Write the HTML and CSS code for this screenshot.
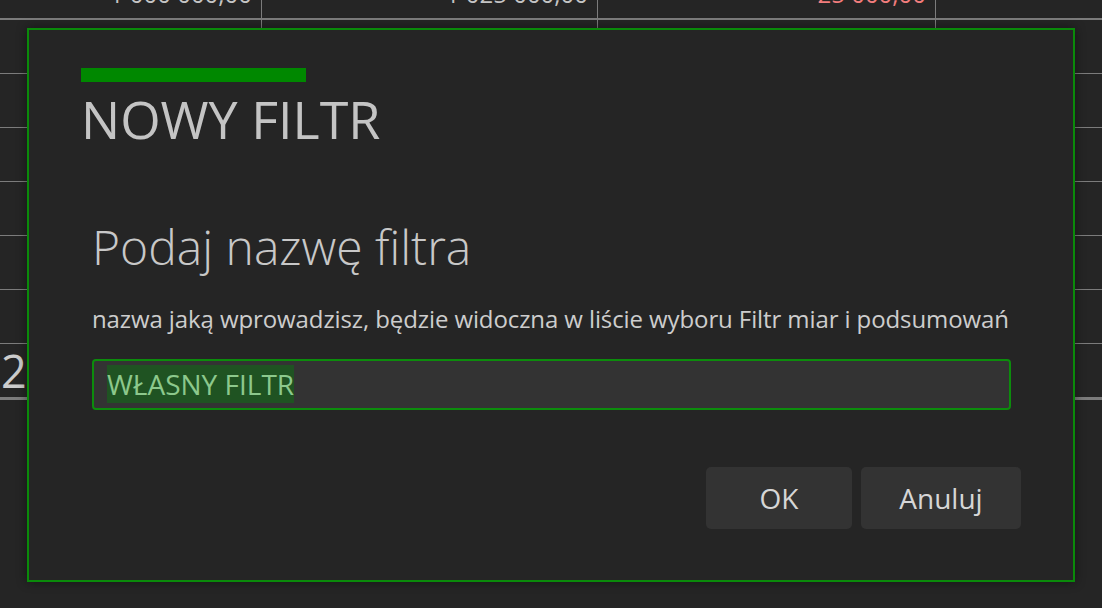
FILE: index.html
```html
<!DOCTYPE html>
<html lang="pl">
<head>
<meta charset="utf-8">
<title>Nowy filtr</title>
<link rel="stylesheet" href="styles.css">
</head>
<body>
<div class="sheet">
  <div class="row row-top">
    <div class="cell num">1 000 000,00</div>
    <div class="cell num">1 025 000,00</div>
    <div class="cell num neg">-25 000,00</div>
    <div class="cell last"></div>
  </div>
  <div class="row"><div class="cell"></div><div class="cell"></div><div class="cell"></div><div class="cell last"></div></div>
  <div class="row"><div class="cell"></div><div class="cell"></div><div class="cell"></div><div class="cell last"></div></div>
  <div class="row"><div class="cell"></div><div class="cell"></div><div class="cell"></div><div class="cell last"></div></div>
  <div class="row"><div class="cell"></div><div class="cell"></div><div class="cell"></div><div class="cell last"></div></div>
  <div class="row"><div class="cell"></div><div class="cell"></div><div class="cell"></div><div class="cell last"></div></div>
  <div class="row"><div class="cell"></div><div class="cell"></div><div class="cell"></div><div class="cell last"></div></div>
  <div class="row row-sum">
    <div class="cell big">2</div><div class="cell"></div><div class="cell"></div><div class="cell last"></div>
  </div>
</div>

<div class="dialog">
  <div class="accent"></div>
  <h1 class="title">NOWY FILTR</h1>
  <div class="content">
    <h2 class="prompt">Podaj nazwę filtra</h2>
    <p class="hint">nazwa jaką wprowadzisz, będzie widoczna w liście wyboru Filtr miar i podsumowań</p>
    <div class="field"><span class="sel">WŁASNY FILTR</span></div>
  </div>
  <div class="actions">
    <button class="btn btn-ok">OK</button>
    <button class="btn btn-cancel">Anuluj</button>
  </div>
</div>
</body>
</html>
```

FILE: styles.css
```css
* { box-sizing: border-box; }
html, body {
  margin: 0;
  padding: 0;
  width: 1102px;
  height: 608px;
  overflow: hidden;
  background: #252525;
  font-family: "Open Sans", "Noto Sans", sans-serif;
}

/* background spreadsheet */
.sheet {
  width: 1102px;
}
.row {
  display: grid;
  grid-template-columns: 262px 336px 338px 1fr;
  height: 54px;
  border-bottom: 1px solid #7c7c7c;
}
.row-top {
  height: 20px;
  border-bottom: 2px solid #7c7c7c;
}
.row-sum {
  height: 56px;
  border-bottom: 3px solid #7c7c7c;
}
.cell {
  border-right: 1px solid #7c7c7c;
  overflow: hidden;
}
.cell.last { border-right: none; }
.num {
  display: flex;
  justify-content: flex-end;
  align-items: flex-end;
  padding-right: 9px;
  padding-bottom: 12px;
  font-size: 24px;
  line-height: 24px;
  color: #c4c4c4;
  white-space: nowrap;
}
.num.neg { color: #f27d7d; }
.big {
  border-right: none;
  font-size: 45px;
  line-height: 53px;
  color: #cccccc;
  padding-left: 1px;
}

/* dialog */
.dialog {
  position: absolute;
  left: 27px;
  top: 28px;
  width: 1048px;
  height: 554px;
  border: 2px solid #0a8a0a;
  background: #252525;
  box-shadow: 0 0 10px rgba(0, 0, 0, 0.45);
  padding: 38px 52px 0 52px;
  display: flex;
  flex-direction: column;
}
.accent {
  width: 225px;
  height: 14px;
  background: #008800;
}
.title {
  margin: 11px 0 0 0;
  font-size: 52px;
  line-height: 52px;
  font-weight: 400;
  color: #c4c4c4;
}
.content {
  padding: 0 10px 0 11px;
}
.prompt {
  margin: 78px 0 0 0;
  font-size: 48px;
  line-height: 48px;
  font-weight: 300;
  color: #c8c8c8;
}
.hint {
  margin: 36px 0 0 0;
  font-size: 24px;
  line-height: 24px;
  letter-spacing: -0.1px;
  color: #cdcdcd;
  white-space: nowrap;
}
.field {
  margin-top: 28px;
  height: 51px;
  border: 2px solid #0c8c0c;
  border-radius: 4px;
  background: #333333;
  padding: 4px 13px 0 13px;
}
.sel {
  display: inline-block;
  height: 38px;
  line-height: 38px;
  font-size: 28px;
  color: #8cc88c;
  background: #1f5322;
  white-space: nowrap;
}
.actions {
  margin-top: 57px;
  display: flex;
  justify-content: flex-end;
  gap: 9px;
}
.btn {
  height: 62px;
  border: none;
  border-radius: 5px;
  background: #333333;
  color: #d6d6d6;
  font-family: "Open Sans", "Noto Sans", sans-serif;
  font-size: 28px;
  line-height: 62px;
  padding: 0;
}
.btn-ok { width: 146px; }
.btn-cancel { width: 160px; }
```
